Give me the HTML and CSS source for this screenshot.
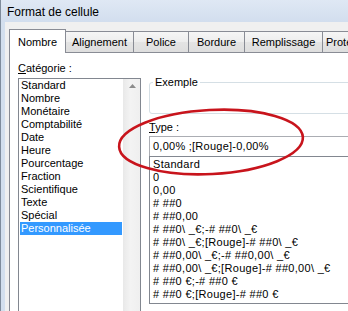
FILE: index.html
```html
<!DOCTYPE html>
<html lang="fr">

<head>
    <meta charset="UTF-8">
    <meta name="viewport" content="width=device-width, initial-scale=1.0">
    <title>Format de cellule</title>
    <link rel="stylesheet" href="styles.css">
</head>

<body>
    <div class="window">
        <div class="titlebar">Format de cellule</div>

        <div class="client">
            <div class="tabs">
                <div class="tab tab-active tab-nombre">Nombre</div>
                <div class="tab tab-alignement">Alignement</div>
                <div class="tab tab-police">Police</div>
                <div class="tab tab-bordure">Bordure</div>
                <div class="tab tab-remplissage">Remplissage</div>
                <div class="tab tab-protection">Protection</div>
            </div>

            <div class="page">
                <div class="left">
                    <div class="label"><u>C</u>atégorie :</div>
                    <div class="listbox">
                        <ul class="items">
                            <li>Standard</li>
                            <li>Nombre</li>
                            <li>Monétaire</li>
                            <li>Comptabilité</li>
                            <li>Date</li>
                            <li>Heure</li>
                            <li>Pourcentage</li>
                            <li>Fraction</li>
                            <li>Scientifique</li>
                            <li>Texte</li>
                            <li>Spécial</li>
                            <li class="selected">Personnalisée</li>
                        </ul>
                        <div class="scrollbar">
                            <svg class="arrow" width="7" height="4" viewBox="0 0 7 4">
                                <polygon points="3.5,0 7,4 0,4" fill="#8c8c8c" />
                            </svg>
                        </div>
                    </div>
                </div>

                <div class="right">
                    <fieldset class="sample">
                        <legend>Exemple</legend>
                    </fieldset>
                    <div class="label"><u>T</u>ype :</div>
                    <div class="type-input">0,00% ;[Rouge]-0,00%</div>
                    <ul class="type-list">
                        <li>Standard</li>
                        <li>0</li>
                        <li>0,00</li>
                        <li># ##0</li>
                        <li># ##0,00</li>
                        <li># ##0\ _€;-# ##0\ _€</li>
                        <li># ##0\ _€;[Rouge]-# ##0\ _€</li>
                        <li># ##0,00\ _€;-# ##0,00\ _€</li>
                        <li># ##0,00\ _€;[Rouge]-# ##0,00\ _€</li>
                        <li># ##0 €;-# ##0 €</li>
                        <li># ##0 €;[Rouge]-# ##0 €</li>
                    </ul>
                </div>
            </div>
        </div>

        <!-- hand-drawn red ring around the Type field -->
        <svg class="ring" width="200" height="76" viewBox="0 0 200 76">
            <ellipse cx="98" cy="38" rx="92" ry="32" transform="rotate(-3 98 38)"
                fill="none" stroke="#c8141c" stroke-width="2.6" />
        </svg>
    </div>
</body>

</html>
```

FILE: styles.css
```css
body {
    margin: 0;
    width: 348px;
    height: 311px;
    overflow: hidden;
    font-family: "Liberation Sans", Arial, sans-serif;
    font-size: 11px;
    color: #000;
}

.window {
    position: relative;
    width: 420px;
    height: 311px;
    border-left: 1px solid #7f8c9c;
    background: #d3dfee;
    display: flex;
    flex-direction: column;
}

.titlebar {
    height: 22px;
    line-height: 25px;
    padding-left: 6px;
    font-size: 12px;
    background: linear-gradient(#dfe8f4, #d2deee);
}

.client {
    flex: 1;
    margin-left: 4px;
    padding: 7px 0 0 4px;
    background: #f0f0f0;
}

.tabs {
    display: flex;
    align-items: flex-end;
    height: 23px;
}

.tab {
    box-sizing: border-box;
    height: 21px;
    line-height: 20px;
    margin-left: -1px;
    text-align: center;
    white-space: nowrap;
    border: 1px solid #898c95;
    border-bottom: none;
    background: linear-gradient(#f6f6f6, #ededed 50%, #e4e4e4 51%, #dedede);
}

.tab-active {
    position: relative;
    z-index: 1;
    height: 24px;
    margin-left: 0;
    margin-bottom: -1px;
    line-height: 24px;
    background: #fff;
}

.tab-nombre { width: 57px; }
.tab-alignement { width: 69px; }
.tab-police { width: 56px; }
.tab-bordure { width: 57px; }
.tab-remplissage { width: 79px; }
.tab-protection { width: 70px; text-align: left; padding-left: 3px; }

.page {
    display: flex;
    height: 300px;
    padding: 8px 0 0 8px;
    border: 1px solid #898c95;
    background: #fff;
}

.label {
    height: 15px;
    line-height: 15px;
}

.left {
    width: 123px;
}

.listbox {
    display: flex;
    box-sizing: border-box;
    width: 123px;
    height: 260px;
    margin-top: 2px;
    border: 1px solid #828790;
}

.items {
    flex: 1;
    list-style: none;
    margin: 0;
    padding: 0 1px;
}

.items li {
    height: 13px;
    line-height: 13px;
    padding-left: 1px;
}

.items .selected {
    background: #3399ff;
    color: #fff;
}

.scrollbar {
    width: 17px;
    display: flex;
    justify-content: center;
    padding-top: 5px;
    box-sizing: border-box;
    border-left: 1px solid #e9e9e9;
    background: linear-gradient(to right, #eaeaea, #f3f3f3 40%, #efefef);
}

.right {
    flex: 1;
    margin-left: 8px;
}

.sample {
    box-sizing: border-box;
    height: 39px;
    margin: 14px 0 0 0;
    padding: 0 0 0 3px;
    border: 1px solid #d5dfe5;
    border-radius: 3px;
}

.sample legend {
    padding: 0 2px;
    line-height: 15px;
}

.right .label {
    margin-top: 6px;
}

.type-input {
    box-sizing: border-box;
    height: 21px;
    margin-top: 1px;
    padding-left: 3px;
    line-height: 19px;
    letter-spacing: 0.25px;
    border: 1px solid #abadb3;
    border-bottom-color: #828790;
}

.type-list {
    box-sizing: border-box;
    height: 148px;
    margin: -1px 0 0 0;
    padding: 1px 0 0 3px;
    list-style: none;
    letter-spacing: 0.3px;
    border: 1px solid #828790;
}

.type-list li {
    height: 13px;
    line-height: 13px;
    white-space: nowrap;
}

.ring {
    position: absolute;
    left: 112px;
    top: 104px;
}
```
